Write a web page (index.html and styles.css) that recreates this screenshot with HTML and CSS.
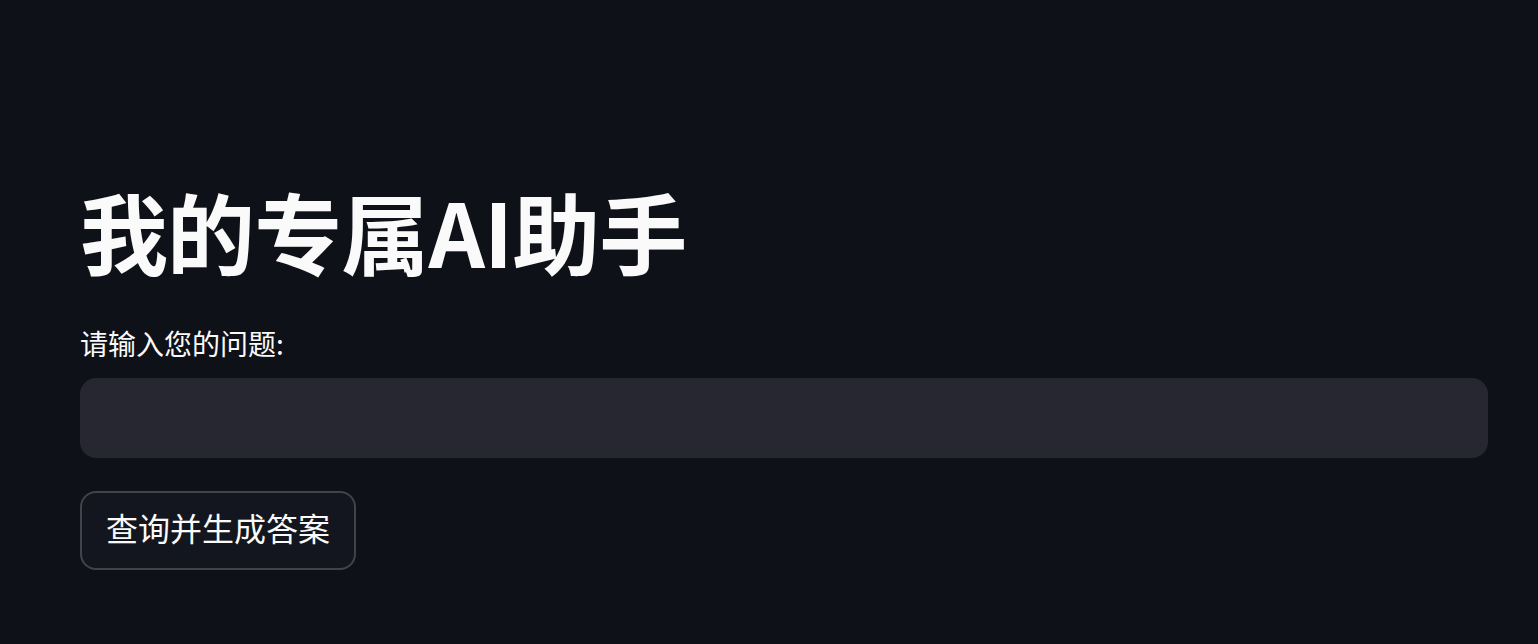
FILE: index.html
```html
<!DOCTYPE html>
<html lang="zh-CN">
<head>
<meta charset="utf-8">
<title>我的专属AI助手</title>
<link rel="stylesheet" href="styles.css">
</head>
<body>
<main class="main">
  <h1 class="title">我的专属AI助手</h1>
  <label class="label" for="q">请输入您的问题:</label>
  <input class="input" id="q" type="text">
  <button class="btn" type="button">查询并生成答案</button>
</main>
</body>
</html>
```
FILE: styles.css
```css
html, body {
  margin: 0;
  padding: 0;
  background: #0e1117;
  color: #fafafa;
  font-family: "Noto Sans CJK SC", "Noto Sans", sans-serif;
}
.main {
  display: flex;
  flex-direction: column;
  align-items: flex-start;
  padding: 177px 50px 0 80px;
}
.title {
  margin: 0;
  font-size: 88px;
  font-weight: 700;
  line-height: 106px;
  letter-spacing: -0.01em;
}
.label {
  margin-top: 41px;
  font-size: 28px;
  line-height: 39px;
}
.input {
  box-sizing: border-box;
  margin-top: 15px;
  width: 100%;
  height: 80px;
  background: #262730;
  border: 2px solid #262730;
  border-radius: 16px;
  color: #fafafa;
  font: inherit;
  font-size: 28px;
  padding: 0 24px;
  outline: none;
}
.btn {
  box-sizing: border-box;
  margin-top: 33px;
  height: 79px;
  padding: 0 24px 7px;
  background: #13161e;
  border: 2px solid rgba(250, 250, 250, 0.2);
  border-radius: 16px;
  color: #fafafa;
  font: inherit;
  font-size: 32px;
  line-height: 1;
}
```
